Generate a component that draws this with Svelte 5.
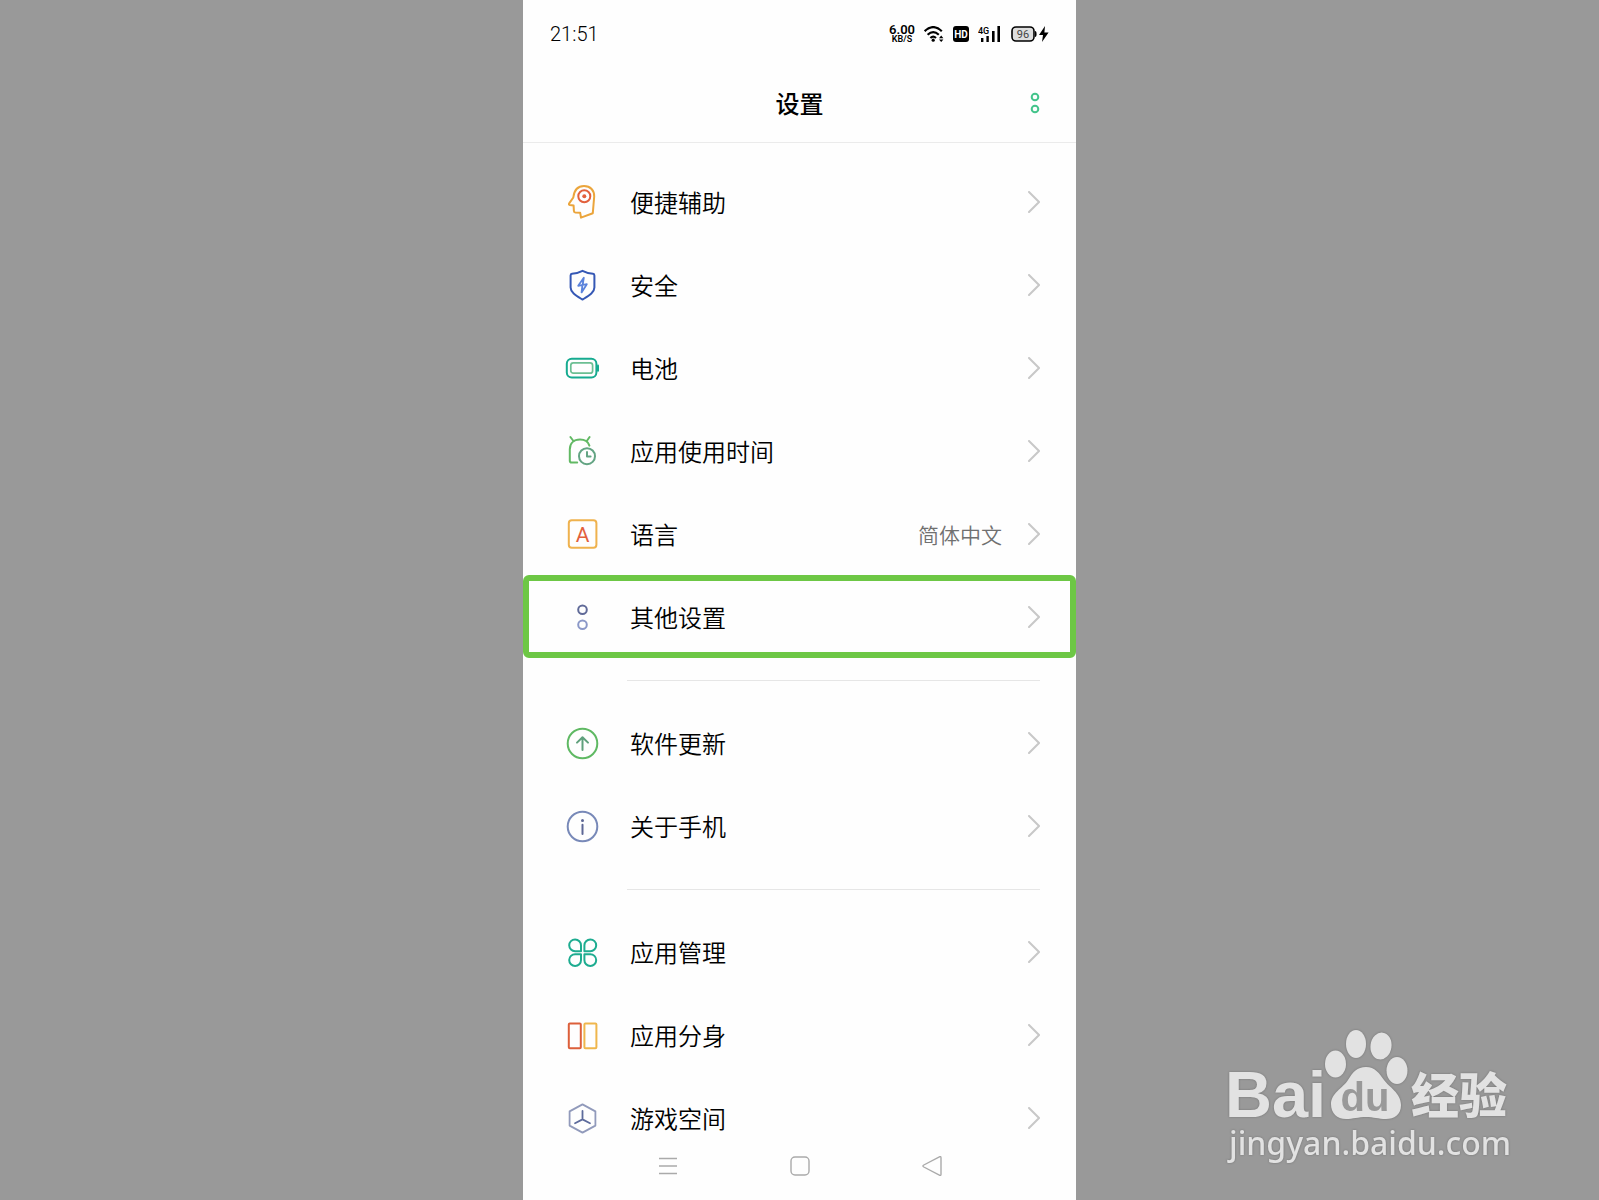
<!--
  App.svelte - Phone settings screen with status bar, grouped list and nav bar
-->
<script lang="ts">
  interface SettingItem {
    id: string;
    label: string;
    value?: string;
  }

  const groups: SettingItem[][] = [
    [
      { id: "assist", label: "便捷辅助" },
      { id: "security", label: "安全" },
      { id: "battery", label: "电池" },
      { id: "usage", label: "应用使用时间" },
      { id: "language", label: "语言", value: "简体中文" },
      { id: "other", label: "其他设置" },
    ],
    [
      { id: "update", label: "软件更新" },
      { id: "about", label: "关于手机" },
    ],
    [
      { id: "apps", label: "应用管理" },
      { id: "clone", label: "应用分身" },
      { id: "games", label: "游戏空间" },
    ],
  ];

  let selected = $state("other");
</script>

{#snippet icon(id: string)}
  <svg class="icon" viewBox="0 0 40 40" aria-hidden="true">
    {#if id === "assist"}
      <path
        d="M10.3 15.5C11.2 8 15 4 21 4C27.5 4 31.4 8.4 31.2 14.5L29.8 31.2L18 35.6L17.2 30.8L12.4 30.6Q11 30.4 10.9 29L10.6 23.6L6.8 23Q5.4 22.6 6.2 21.4Z"
        stroke="#eba53c"
      />
      <circle cx="21.3" cy="14.3" r="6" stroke="#e2603c" />
      <circle cx="21.3" cy="14.3" r="2" fill="#e2603c" stroke="none" />
    {:else if id === "security"}
      <path
        d="M19.5 5.8C16 7.6 12 8.7 9 8.8Q7.6 9 7.6 10.5V22.5C7.6 27.5 13 30.5 19.5 34.6C26 30.5 31.4 27.5 31.4 22.5V10.5Q31.4 9 30 8.8C27 8.7 23 7.6 19.5 5.8Z"
        stroke="#3558b5"
      />
      <path d="M20.8 12.8L15.2 20.8L23.8 19.2L18.6 27.4M20.8 12.8L19.6 20M19.4 20.4L18.6 27.4" stroke="#5b83dc" stroke-width="1.8" />
    {:else if id === "battery"}
      <rect x="3.8" y="10.8" width="29.6" height="18.6" rx="5" stroke="#16ab90" />
      <rect x="7.8" y="14.8" width="21.8" height="10.4" rx="2.5" stroke="#6cbf93" stroke-width="1.7" />
      <path d="M35 17.4V22.8" stroke="#16ab90" />
    {:else if id === "usage"}
      <path
        d="M7.4 6L10.4 10M26.6 6L23.8 10M14.2 31.6H8.6Q6.8 31.6 6.8 29.8V18.4C6.8 12.2 11 8.6 17 8.6C21.6 8.6 25.2 10.8 26.4 14.6"
        stroke="#62b964"
      />
      <circle cx="24" cy="25.2" r="8" stroke="#63a483" />
      <path d="M24 21V25.6H27.6" stroke="#63a483" />
    {:else if id === "language"}
      <rect x="5.8" y="6.2" width="27.6" height="27.6" rx="3" stroke="#efb24e" />
      <text x="19.6" y="27.6" text-anchor="middle" class="letter">A</text>
    {:else if id === "other"}
      <circle cx="19.5" cy="12.8" r="4.3" stroke="#606a98" />
      <circle cx="19.5" cy="27.8" r="4.3" stroke="#8b98c8" />
    {:else if id === "update"}
      <circle cx="19.5" cy="20.5" r="14.8" stroke="#5fb963" />
      <path d="M14 19.6L19.5 14.2L25 19.6M19.5 14.8V27" stroke="#5fa07c" />
    {:else if id === "about"}
      <circle cx="19.5" cy="20.5" r="14.8" stroke="#7889b8" />
      <path d="M19.5 18.8V28" stroke="#5d6795" />
      <circle cx="19.5" cy="14.6" r="1.5" fill="#5d6795" stroke="none" />
    {:else if id === "apps"}
      <path
        d="M18 19.2H12.2A5.9 5.9 0 1 1 18 13.4ZM21.4 19.2H27.2A5.9 5.9 0 1 0 21.4 13.4ZM18 22.2H12.2A5.9 5.9 0 1 0 18 28ZM21.4 22.2H27.2A5.9 5.9 0 1 1 21.4 28Z"
        stroke="#1dac90"
      />
    {:else if id === "clone"}
      <rect x="5.8" y="8.6" width="12" height="24.6" rx="1" stroke="#dc5f3a" />
      <rect x="21.4" y="8.6" width="12" height="24.6" rx="1" stroke="#efb64c" />
    {:else if id === "games"}
      <path d="M19.5 6.4L32.4 13.4V27.6L19.5 34.6L6.6 27.6V13.4Z" stroke="#919abb" stroke-width="1.8" />
      <path d="M19.5 13V21.4M12 25.2L19.5 21.4L27 25.2" stroke="#5d6b9c" stroke-width="1.8" />
    {/if}
  </svg>
{/snippet}

<div class="page">
  <main class="phone">
    <div class="status-bar">
      <time class="clock">21:51</time>
      <div class="status-icons">
        <div class="speed">
          <span class="speed-value">6.00</span>
          <span class="speed-unit">KB/S</span>
        </div>
        <svg width="20" height="16" viewBox="0 0 20 16" aria-hidden="true">
          <g fill="none" stroke="#000" stroke-width="2.2">
            <path d="M.6 5.2Q9.2-3 17.8 5.2" />
            <path d="M3.6 8.8Q9.2 3.6 14.8 8.8" />
            <path d="M6.4 12Q9.2 9.4 12 12" />
          </g>
          <circle cx="9.2" cy="14.2" r="1.6" />
          <path d="M15 12.2L17.2 9.6L19.4 12.2ZM15 13.4L17.2 16L19.4 13.4Z" />
        </svg>
        <svg width="16" height="16" viewBox="0 0 16 16" aria-hidden="true">
          <rect width="16" height="16" rx="3" />
          <text x="8" y="12" text-anchor="middle" class="hd">HD</text>
        </svg>
        <svg width="24" height="16" viewBox="0 0 24 16" aria-hidden="true">
          <text x="0" y="8" class="network">4G</text>
          <path d="M3 12h2.4v4H3zM8.4 10h2.4v6H8.4zM14 5h2.6v11H14zM19.4 0H22v16h-2.6z" />
        </svg>
        <svg width="38" height="16" viewBox="0 0 38 16" aria-hidden="true">
          <rect x="1" y="1" width="22" height="14" rx="4" fill="#ddd" stroke="#000" stroke-width="1.6" />
          <path d="M24 5Q25.6 5 25.6 8Q25.6 11 24 11Z" />
          <text x="12" y="12" text-anchor="middle" class="charge">96</text>
          <path d="M34 0L28 9H32L31 16L37.6 6.6H33.4Z" />
        </svg>
      </div>
    </div>

    <header class="title-bar">
      <h1>设置</h1>
      <button class="more" aria-label="更多">
        <svg width="10" height="22" viewBox="0 0 10 22">
          <circle cx="5" cy="5" r="3.3" />
          <circle cx="5" cy="17" r="3.3" />
        </svg>
      </button>
    </header>

    <div class="settings">
      {#each groups as group}
        <ul class="group">
          {#each group as item (item.id)}
            <li>
              <button
                class="row"
                class:selected={selected === item.id}
                onclick={() => (selected = item.id)}
              >
                {@render icon(item.id)}
                <span class="label">{item.label}</span>
                {#if item.value}
                  <span class="value">{item.value}</span>
                {/if}
                <svg class="chevron" viewBox="0 0 12 22" aria-hidden="true">
                  <path d="M1 1L11 11L1 21" />
                </svg>
              </button>
            </li>
          {/each}
        </ul>
      {/each}
    </div>

    <nav class="nav-bar">
      <button aria-label="菜单">
        <svg viewBox="0 0 20 20"><path d="M1 2.5H19M1 10H19M1 17.5H19" /></svg>
      </button>
      <button aria-label="主页">
        <svg viewBox="0 0 20 20"><rect x="1" y="1" width="18" height="18" rx="4" /></svg>
      </button>
      <button aria-label="返回">
        <svg viewBox="0 0 20 20"><path d="M17.4 .8Q19 0 19 1.8V18.2Q19 20 17.4 19.2L1.8 11Q0 10 1.8 9Z" /></svg>
      </button>
    </nav>
  </main>

  <!-- Watermark -->
  <svg class="watermark" viewBox="0 0 320 170" role="img" aria-label="Baidu 经验">
    <text x="15" y="107" class="brand">Bai</text>
    <ellipse cx="125.5" cy="54" rx="10.5" ry="13.5" />
    <ellipse cx="146" cy="34" rx="10" ry="14" />
    <ellipse cx="171" cy="36" rx="10.5" ry="13.5" transform="rotate(8 171 36)" />
    <ellipse cx="187" cy="60.5" rx="10.5" ry="13.5" />
    <path
      d="M156 57C165 57 169 63 174 70C179 77 191 83 191 95C191 105 184 109 176 109C168 109 164 107 156 107C148 107 143 109 136 109C127 109 121 103 121 94C121 83 133 78 138 70C143 62 147 57 156 57Z"
    />
    <text x="155" y="101" text-anchor="middle" class="du">du</text>
    <text x="201" y="103" class="product">经验</text>
    <text x="19" y="145" class="address">jingyan.baidu.com</text>
  </svg>
</div>

<style>
  :global(body) {
    background: #999;
  }

  .page {
    position: relative;
    display: flex;
    justify-content: center;
    height: 100vh;
    overflow: hidden;
    font-family: "Noto Sans CJK SC", sans-serif;
    color: #000;
  }

  .phone {
    display: flex;
    flex-direction: column;
    width: 100%;
    max-width: 553px;
    background: #fefefe;
  }

  button {
    padding: 0;
    border: none;
    background: none;
    font: inherit;
    color: inherit;
    cursor: pointer;
  }

  svg {
    display: block;
  }

  /* Status bar */
  .status-bar {
    display: flex;
    flex: none;
    align-items: center;
    justify-content: space-between;
    box-sizing: border-box;
    height: 64px;
    padding: 4px 27px 0 27px;
    font-family: Roboto, sans-serif;
  }

  .clock {
    font-size: 20px;
    font-weight: 300;
    line-height: 24px;
  }

  .status-icons {
    display: flex;
    align-items: center;
    gap: 9px;
  }

  .speed {
    display: flex;
    flex-direction: column;
    align-items: center;
    font-weight: 600;
  }

  .speed-value {
    font-size: 13px;
    line-height: 11px;
  }

  .speed-unit {
    font-size: 9px;
    line-height: 9px;
  }

  .hd {
    fill: #fff;
    font-size: 10px;
    font-weight: 700;
  }

  .network {
    font-size: 9px;
    font-weight: 500;
  }

  .charge {
    fill: #444;
    font-size: 11px;
  }

  /* Title */
  .title-bar {
    display: grid;
    flex: none;
    grid-template-columns: 1fr auto 1fr;
    align-items: center;
    height: 78px;
    padding: 0 36px;
    border-bottom: 1px solid #ebebeb;
  }

  h1 {
    grid-column: 2;
    margin: 0;
    font-size: 24px;
    font-weight: 500;
    line-height: 36px;
  }

  .more {
    justify-self: end;
  }

  .more circle {
    fill: none;
    stroke: #43c48b;
    stroke-width: 2;
  }

  /* Settings list */
  .settings {
    flex: 1;
    min-height: 0;
    padding-top: 17px;
    overflow: hidden;
  }

  .group {
    margin: 0;
    padding: 0;
    list-style: none;
  }

  .group + .group::before {
    content: "";
    display: block;
    height: 1px;
    margin: 22px 36px 20px 104px;
    background: #e6e6e6;
  }

  .row {
    display: flex;
    align-items: center;
    box-sizing: border-box;
    width: 100%;
    height: 83px;
    padding: 0 30px 0 34px;
    border: 6px solid transparent;
    border-radius: 6px;
    text-align: left;
  }

  .row.selected {
    border-color: #6dc745;
  }

  .icon {
    flex: none;
    width: 40px;
    height: 40px;
    fill: none;
    stroke-width: 2;
    stroke-linecap: round;
    stroke-linejoin: round;
  }

  .letter {
    fill: #e2603c;
    font-family: Roboto, sans-serif;
    font-size: 21px;
    stroke: none;
  }

  .label {
    flex: 1;
    margin-left: 27px;
    font-size: 24px;
    font-weight: 350;
    line-height: 36px;
  }

  .value {
    margin-right: 26px;
    font-size: 21px;
    font-weight: 350;
    line-height: 32px;
    color: #707070;
  }

  .chevron {
    flex: none;
    width: 12px;
    height: 22px;
    fill: none;
    stroke: #c8c8c8;
    stroke-width: 2;
    stroke-linecap: round;
  }

  /* Navigation */
  .nav-bar {
    display: flex;
    flex: none;
    align-items: center;
    justify-content: center;
    gap: 112px;
    box-sizing: border-box;
    height: 62px;
    padding-bottom: 6px;
  }

  .nav-bar svg {
    width: 20px;
    height: 20px;
    fill: none;
    stroke: #aaa;
    stroke-width: 1.4;
  }

  /* Watermark */
  .watermark {
    position: absolute;
    right: 69px;
    bottom: 20px;
    width: 320px;
    height: 170px;
    fill: #e2e2e2;
    filter: drop-shadow(0 0 1px rgba(0, 0, 0, 0.25));
  }

  .brand {
    font-family: "Liberation Sans", sans-serif;
    font-size: 65px;
    font-weight: 700;
  }

  .du {
    fill: #999;
    font-family: "Liberation Sans", sans-serif;
    font-size: 40px;
    font-weight: 700;
  }

  .product {
    font-size: 48px;
    font-weight: 900;
  }

  .address {
    font-family: "Noto Sans", sans-serif;
    font-size: 32px;
    font-weight: 500;
  }
</style>
